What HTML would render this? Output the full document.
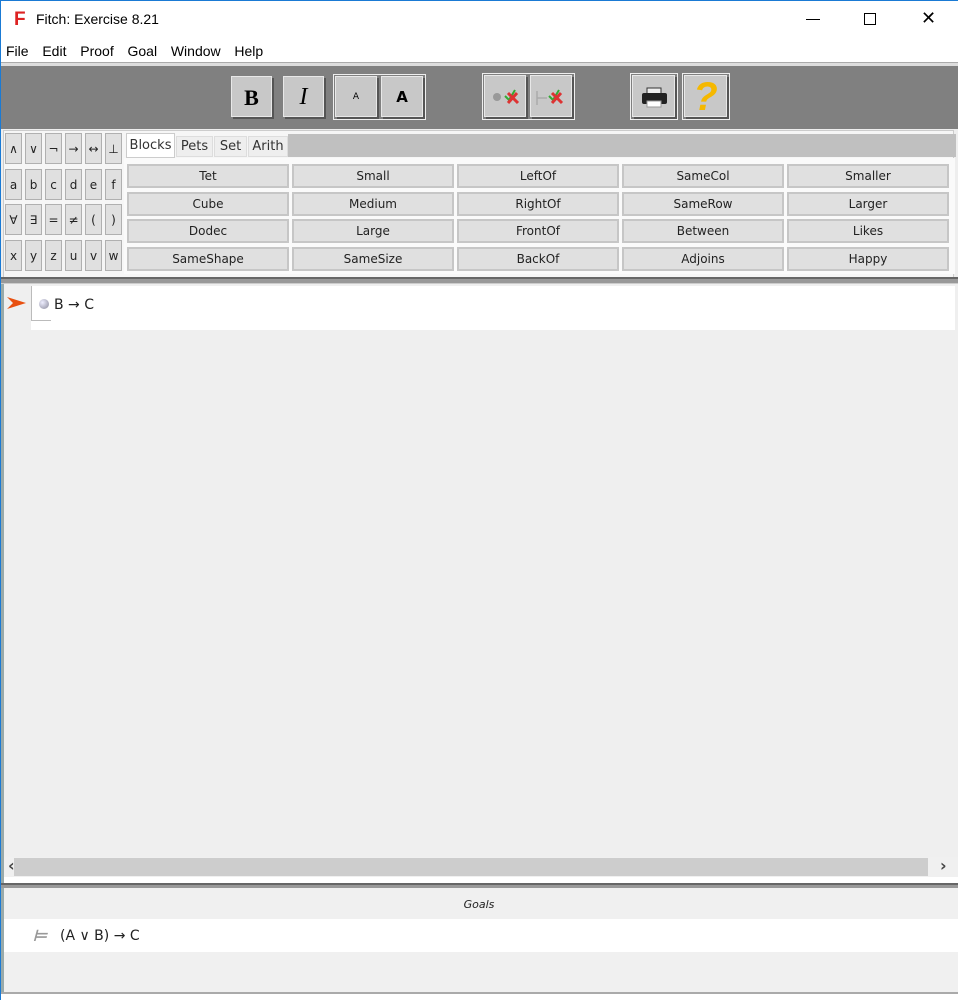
<!DOCTYPE html>
<html><head><meta charset="utf-8"><style>
*{margin:0;padding:0;box-sizing:border-box}
body{width:958px;height:1000px;position:relative;background:#fff;font-family:"Liberation Sans","DejaVu Sans",sans-serif;overflow:hidden}
.a{position:absolute}
.tb{background:#c8c8c8;border:1px solid #e8e8e8;box-shadow:2px 2px 0 #555;}
.sym{position:absolute;width:17px;height:31px;background:#e0e0e0;border:1px solid #b0b0b0;font:12px "DejaVu Sans",sans-serif;color:#222;display:flex;align-items:center;justify-content:center}
.pb{position:absolute;width:162px;height:24px;background:#e0e0e0;border:2px solid #c6c6c6;font:12px "DejaVu Sans",sans-serif;color:#222;display:flex;align-items:center;justify-content:center}
.tab{position:absolute;top:136px;height:21px;background:#eee;border:1px solid #ddd;font:13px "DejaVu Sans",sans-serif;color:#333;display:flex;align-items:center;justify-content:center}
</style></head><body>
<div class="a" style="left:0;top:0;width:958px;height:1px;background:#1a7ad4"></div>
<div class="a" style="left:0;top:0;width:1px;height:1000px;background:#1a7ad4"></div>
<div class="a" style="left:14px;top:9px;font:bold 19px 'Liberation Sans';color:#d22">F</div>
<div class="a" style="left:36px;top:11px;font:14px 'Liberation Sans';color:#000">Fitch: Exercise 8.21</div>
<div class="a" style="left:806px;top:19px;width:14px;height:1px;background:#000"></div>
<div class="a" style="left:864px;top:13px;width:12px;height:12px;border:1px solid #000"></div>
<div class="a" style="left:921px;top:12px;font:18px 'DejaVu Sans';color:#000;line-height:14px">✕</div>
<div class="a" style="left:6px;top:43px;font:14px 'Liberation Sans';color:#000;word-spacing:3px">File&nbsp; Edit&nbsp; Proof&nbsp; Goal&nbsp; Window&nbsp; Help</div>
<!-- toolbar -->
<div class="a" style="left:1px;top:62px;width:957px;height:4px;background:#ddd;border-top:1px solid #aaa"></div>
<div class="a" style="left:1px;top:66px;width:957px;height:63px;background:#808080"></div>
<div class="a tb" style="left:231px;top:76px;width:41px;height:41px;font:bold 22px 'Liberation Serif';text-align:center;line-height:41px">B</div>
<div class="a tb" style="left:283px;top:76px;width:41px;height:41px;font:italic 24px 'Liberation Serif';text-align:center;line-height:41px">I</div>
<div class="a" style="left:333px;top:74px;width:93px;height:46px;border:1px solid #eee"></div>
<div class="a tb" style="left:335px;top:76px;width:42px;height:41px;font:9px 'DejaVu Sans';text-align:center;line-height:41px">A</div>
<div class="a tb" style="left:381px;top:76px;width:42px;height:41px;font:bold 15px 'DejaVu Sans';text-align:center;line-height:41px">A</div>
<div class="a" style="left:482px;top:73px;width:93px;height:47px;border:1px solid #eee"></div>
<div class="a tb" style="left:484px;top:75px;width:42px;height:42px"><svg width="42" height="42"><circle cx="12" cy="21" r="4" fill="#999"/><path d="M20 20l4 4 6-10" stroke="#3a3" stroke-width="2" fill="none"/><path d="M23 17l10 10M32 17l-9 10" stroke="#d33" stroke-width="3"/></svg></div>
<div class="a tb" style="left:530px;top:75px;width:42px;height:42px"><svg width="42" height="42"><path d="M6 15v14M6 22h10" stroke="#aaa" stroke-width="1.5"/><path d="M18 20l4 4 6-10" stroke="#3a3" stroke-width="2" fill="none"/><path d="M21 17l10 10M30 17l-9 10" stroke="#d33" stroke-width="3"/></svg></div>
<div class="a" style="left:630px;top:73px;width:48px;height:47px;border:1px solid #eee"></div>
<div class="a tb" style="left:632px;top:75px;width:43px;height:42px"><svg width="43" height="42"><rect x="14" y="12" width="14" height="6" fill="#eee" stroke="#333"/><rect x="9" y="17" width="25" height="11" rx="2" fill="#222"/><rect x="14" y="25" width="14" height="6" fill="#fff" stroke="#999"/></svg></div>
<div class="a" style="left:682px;top:73px;width:48px;height:47px;border:1px solid #eee"></div>
<div class="a tb" style="left:684px;top:75px;width:43px;height:42px;font:bold 40px 'Liberation Sans';color:#f5b800;text-align:center;line-height:42px;font-style:italic">?</div>
<!-- palette -->
<div class="a" style="left:1px;top:129px;width:957px;height:150px;background:#eee"></div>
<div class="a" style="left:3px;top:130px;width:951px;height:148px;border:1px solid #ccc;background:#f6f6f6"></div>
<div id="syms"></div>
<div class="a" style="left:288px;top:134px;width:668px;height:23px;background:#c0c0c0"></div>
<div class="tab" style="left:126px;top:133px;width:49px;height:25px;background:#fff;border-color:#ccc">Blocks</div>
<div class="tab" style="left:176px;width:37px">Pets</div>
<div class="tab" style="left:214px;width:33px">Set</div>
<div class="tab" style="left:248px;width:40px">Arith</div>
<div class="a" style="left:124px;top:158px;width:831px;height:116px;background:#fafafa"></div>
<div id="preds"></div>
<div class="a" style="left:1px;top:277px;width:957px;height:7px;background:#999;border-top:2px solid #666;border-bottom:1px solid #ccc"></div>
<!-- proof -->
<div class="a" style="left:1px;top:284px;width:957px;height:574px;background:#efefef"></div>
<div class="a" style="left:1px;top:284px;width:3px;height:716px;background:#9aa"></div>
<div class="a" style="left:31px;top:286px;width:924px;height:44px;background:#fff"></div>
<div class="a" style="left:31px;top:286px;width:1px;height:34px;background:#bbb"></div>
<div class="a" style="left:31px;top:320px;width:20px;height:1px;background:#bbb"></div>
<svg class="a" style="left:7px;top:296px" width="20" height="14"><path d="M0 1L19 7L0 13L6 7Z" fill="#e85010"/></svg>
<div class="a" style="left:39px;top:299px;width:10px;height:10px;border-radius:50%;background:radial-gradient(circle at 35% 35%,#eef,#889)"></div>
<div class="a" style="left:54px;top:297px;font:14px 'DejaVu Sans';color:#222">B → C</div>
<!-- scrollbar -->
<div class="a" style="left:4px;top:857px;width:954px;height:20px;background:#f0f0f0"></div>
<div class="a" style="left:14px;top:858px;width:914px;height:18px;background:#cdcdcd"></div>
<div class="a" style="left:8px;top:856px;font:bold 16px 'DejaVu Sans';color:#444">‹</div>
<div class="a" style="left:940px;top:856px;font:bold 16px 'DejaVu Sans';color:#444">›</div>
<div class="a" style="left:1px;top:883px;width:957px;height:5px;background:#999;border-top:2px solid #666"></div>
<!-- goals -->
<div class="a" style="left:4px;top:888px;width:954px;height:104px;background:#f0f0f0"></div>
<div class="a" style="left:0;top:898px;width:958px;text-align:center;font:italic 11px 'DejaVu Sans';color:#222">Goals</div>
<div class="a" style="left:4px;top:919px;width:954px;height:33px;background:#fff"></div>
<div class="a" style="left:34px;top:926px;font:bold 16px 'DejaVu Sans';color:#999;transform:skewX(-15deg)">⊨</div>
<div class="a" style="left:60px;top:928px;font:14px 'DejaVu Sans';color:#222">(A ∨ B) → C</div>
<div class="a" style="left:1px;top:992px;width:957px;height:8px;background:#fff;border-top:2px solid #aaa"></div>
<script>
var s=[["∧","∨","¬","→","↔","⊥"],["a","b","c","d","e","f"],["∀","∃","=","≠","(",")"],["x","y","z","u","v","w"]];
var ys=[133,169,204,240],h="";
s.forEach(function(r,i){r.forEach(function(c,j){h+='<div class="sym" style="left:'+(5+j*20)+'px;top:'+ys[i]+'px">'+c+'</div>'})});
document.getElementById('syms').innerHTML=h;
var p=[["Tet","Small","LeftOf","SameCol","Smaller"],["Cube","Medium","RightOf","SameRow","Larger"],["Dodec","Large","FrontOf","Between","Likes"],["SameShape","SameSize","BackOf","Adjoins","Happy"]];
h="";
p.forEach(function(r,i){r.forEach(function(c,j){h+='<div class="pb" style="left:'+(127+j*165)+'px;top:'+(164+i*27.5)+'px">'+c+'</div>'})});
document.getElementById('preds').innerHTML=h;
</script>
</body></html>
